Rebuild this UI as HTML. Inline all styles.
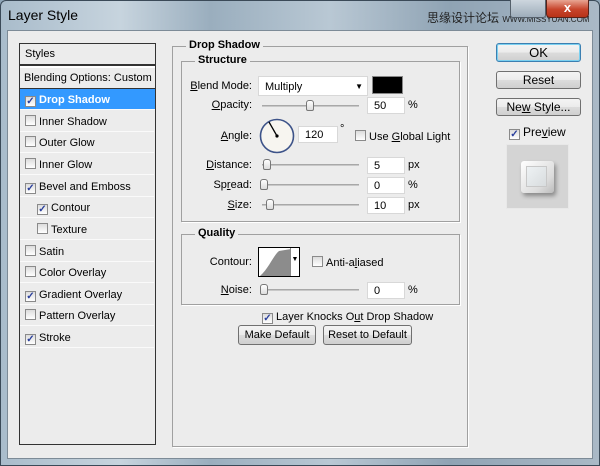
<!DOCTYPE html>
<html><head><meta charset="utf-8"><style>
*{margin:0;padding:0;box-sizing:border-box}
body{width:600px;height:466px;overflow:hidden;background:#8fa6b8;font-family:"Liberation Sans",Arial,sans-serif;font-size:11px;color:#000;position:relative;white-space:nowrap}
.a{position:absolute}
#frame{left:0;top:0;width:600px;height:466px;background:linear-gradient(90deg,#a9bccb 0%,#c7d4de 20%,#9aaebe 35%,#b9c8d4 55%,#8fa3b4 75%,#aab9c6 100%);border:1px solid #3b4a58;border-radius:6px 6px 0 0}
#client{left:7px;top:30px;width:586px;height:429px;background:#ececec;border:1px solid #7d8b97}
.g{position:absolute;border:1px solid #a0a0a0;box-shadow:1px 1px 0 #fff}
.lg{position:absolute;background:#ececec;font-weight:bold;padding:0 3px;font-size:11px}
.row{position:absolute;left:20px;width:134px;height:21px;border-bottom:1px solid #fafafa;line-height:22px;padding-left:5px}
.cb{display:inline-block;width:11px;height:11px;border:1px solid #8a8a8a;background:linear-gradient(#dcdcdc,#fff);vertical-align:-1px;margin-right:3px;position:relative;color:#2a3f9c;font-size:10px;line-height:9px;text-align:center;font-weight:bold}
.inp{position:absolute;background:#fff;border:1px solid #d8d8d8;height:17px;line-height:17px;padding-left:6px}
.sl{position:absolute;height:2px;background:#c8c8c8;border-top:1px solid #a8a8a8}
.th{position:absolute;width:8px;height:11px;border:1px solid #777;border-radius:3px 3px 2px 2px;background:linear-gradient(#fff,#ddd);top:-6px}
.btn{position:absolute;border:1px solid #707070;border-radius:3px;background:linear-gradient(#f4f4f4 0%,#ebebeb 50%,#dcdcdc 51%,#cfcfcf 100%);text-align:center}
.lab{position:absolute;text-align:right}
u{text-decoration:underline}
</style></head><body>
<div id="frame" class="a"></div>
<div class="a" style="left:8px;top:7px;font-size:14px;color:#000">Layer Style</div>
<div class="a" style="left:427px;top:9px;font-size:12px;color:#222;font-family:'Liberation Sans','Noto Sans CJK SC',sans-serif">思缘设计论坛 <span style="font-size:8px">WWW.MISSYUAN.COM</span></div>
<div class="a" style="left:510px;top:0;width:36px;height:18px;border:1px solid #55606b;border-top:0;border-radius:0 0 3px 3px;background:linear-gradient(#cdd6de,#9eadbb)"></div>
<div class="a" style="left:546px;top:0;width:43px;height:18px;border:1px solid #5a2218;border-top:0;border-radius:0 0 4px 4px;background:linear-gradient(#e8a593,#c7442b 55%,#b83318);color:#fff;text-align:center;font-weight:bold;font-size:13px;line-height:16px">x</div>
<div id="client" class="a"></div>

<div class="a" style="left:19px;top:43px;width:137px;height:402px;border:1px solid #333;background:#ececec"></div>
<div class="a" style="left:20px;top:44px;width:135px;height:22px;border-bottom:2px solid #333;line-height:21px;padding-left:5px">Styles</div>
<div class="a" style="left:20px;top:66px;width:135px;height:2px;background:#fff"></div>
<div class="a" style="left:20px;top:68px;width:135px;height:21px;border-bottom:1px solid #333;line-height:21px;padding-left:4px">Blending Options: Custom</div>
<div class="row" style="top:89px;background:#3399ff;color:#fff;font-weight:bold;width:135px"><span class="cb" style="color:#2a3f9c">✓</span>Drop Shadow</div>
<div class="row" style="top:111px"><span class="cb"></span>Inner Shadow</div>
<div class="row" style="top:132px"><span class="cb"></span>Outer Glow</div>
<div class="row" style="top:154px"><span class="cb"></span>Inner Glow</div>
<div class="row" style="top:176px"><span class="cb">✓</span>Bevel and Emboss</div>
<div class="row" style="top:197px;padding-left:17px"><span class="cb">✓</span>Contour</div>
<div class="row" style="top:219px;padding-left:17px"><span class="cb"></span>Texture</div>
<div class="row" style="top:241px"><span class="cb"></span>Satin</div>
<div class="row" style="top:262px"><span class="cb"></span>Color Overlay</div>
<div class="row" style="top:284px"><span class="cb">✓</span>Gradient Overlay</div>
<div class="row" style="top:305px"><span class="cb"></span>Pattern Overlay</div>
<div class="row" style="top:327px"><span class="cb">✓</span>Stroke</div>

<div class="g" style="left:172px;top:46px;width:296px;height:401px"></div>
<div class="lg" style="left:186px;top:39px">Drop Shadow</div>
<div class="g" style="left:181px;top:61px;width:279px;height:161px"></div>
<div class="lg" style="left:195px;top:54px">Structure</div>

<div class="lab" style="left:180px;width:72px;top:80px"><u>B</u>lend Mode:</div>
<div class="inp" style="left:258px;top:76px;width:110px;height:20px;line-height:20px">Multiply<span style="position:absolute;right:4px;top:0;font-size:8px">▼</span></div>
<div class="a" style="left:372px;top:76px;width:31px;height:18px;background:#000;border:1px solid #888"></div>

<div class="lab" style="left:180px;width:72px;top:99px"><u>O</u>pacity:</div>
<div class="sl" style="left:262px;top:105px;width:97px"><div class="th" style="left:44px"></div></div>
<div class="inp" style="left:367px;top:97px;width:38px">50</div><div class="a" style="left:408px;top:99px">%</div>

<div class="lab" style="left:180px;width:72px;top:130px"><u>A</u>ngle:</div>
<svg class="a" style="left:258px;top:118px" width="38" height="38"><circle cx="19" cy="18" r="16.5" fill="#f7f5f0" stroke="#3d5389" stroke-width="1.6"/><line x1="19" y1="18" x2="11" y2="4" stroke="#000" stroke-width="1.3"/><circle cx="19" cy="18" r="1.6"/></svg>
<div class="inp" style="left:298px;top:126px;width:40px">120</div><div class="a" style="left:340px;top:123px">°</div>
<div class="a" style="left:355px;top:130px"><span class="cb"></span>Use <u>G</u>lobal Light</div>

<div class="lab" style="left:180px;width:72px;top:159px"><u>D</u>istance:</div>
<div class="sl" style="left:262px;top:164px;width:97px"><div class="th" style="left:1px"></div></div>
<div class="inp" style="left:367px;top:157px;width:38px">5</div><div class="a" style="left:408px;top:159px">px</div>
<div class="lab" style="left:180px;width:72px;top:179px">Sp<u>r</u>ead:</div>
<div class="sl" style="left:260px;top:184px;width:99px"><div class="th" style="left:0"></div></div>
<div class="inp" style="left:367px;top:177px;width:38px">0</div><div class="a" style="left:408px;top:179px">%</div>
<div class="lab" style="left:180px;width:72px;top:199px"><u>S</u>ize:</div>
<div class="sl" style="left:262px;top:204px;width:97px"><div class="th" style="left:4px"></div></div>
<div class="inp" style="left:367px;top:197px;width:38px">10</div><div class="a" style="left:408px;top:199px">px</div>

<div class="g" style="left:181px;top:234px;width:279px;height:71px"></div>
<div class="lg" style="left:195px;top:227px">Quality</div>
<div class="lab" style="left:180px;width:72px;top:256px">Contour:</div>
<div class="a" style="left:258px;top:247px;width:42px;height:30px;border:1px solid #000;background:#fff">
<svg width="32" height="28" style="position:absolute;left:0;top:0"><path d="M1 28 C10 20 14 8 20 3 L32 1 L32 28Z" fill="#8c8c8c"/></svg>
<div style="position:absolute;left:31px;top:0;width:9px;height:28px;border-left:1px solid #888;font-size:7px;line-height:24px;text-align:center">▼</div></div>
<div class="a" style="left:312px;top:256px"><span class="cb"></span>Anti-a<u>l</u>iased</div>
<div class="lab" style="left:180px;width:72px;top:284px"><u>N</u>oise:</div>
<div class="sl" style="left:260px;top:289px;width:99px"><div class="th" style="left:0"></div></div>
<div class="inp" style="left:367px;top:282px;width:38px">0</div><div class="a" style="left:408px;top:284px">%</div>

<div class="a" style="left:262px;top:311px"><span class="cb">✓</span>Layer Knocks O<u>u</u>t Drop Shadow</div>
<div class="btn" style="left:238px;top:325px;width:78px;height:20px;line-height:19px">Make Default</div>
<div class="btn" style="left:323px;top:325px;width:89px;height:20px;line-height:19px">Reset to Default</div>

<div class="btn" style="left:496px;top:43px;width:85px;height:19px;line-height:17px;font-size:13px;border-color:#3c7fb1;box-shadow:0 0 0 1px #7ad0f0 inset">OK</div>
<div class="btn" style="left:496px;top:71px;width:85px;height:18px;line-height:16px;font-size:12px">Reset</div>
<div class="btn" style="left:496px;top:98px;width:85px;height:18px;line-height:16px;font-size:12px">Ne<u>w</u> Style...</div>
<div class="a" style="left:509px;top:125px;font-size:12px"><span class="cb">✓</span>Pre<u>v</u>iew</div>
<div class="a" style="left:506px;top:144px;width:63px;height:65px;background:#d4d4d4;border:1px solid #e8e8e8"></div>
<div class="a" style="left:521px;top:161px;width:33px;height:32px;border-radius:3px;background:linear-gradient(135deg,#fff,#dcdcdc 70%,#bbb);box-shadow:2px 3px 4px rgba(0,0,0,.35)"><div style="margin:5px;width:21px;height:21px;background:linear-gradient(135deg,#eef2f4,#d8dcde);border:1px solid #c8c8c8"></div></div>
</body></html>
